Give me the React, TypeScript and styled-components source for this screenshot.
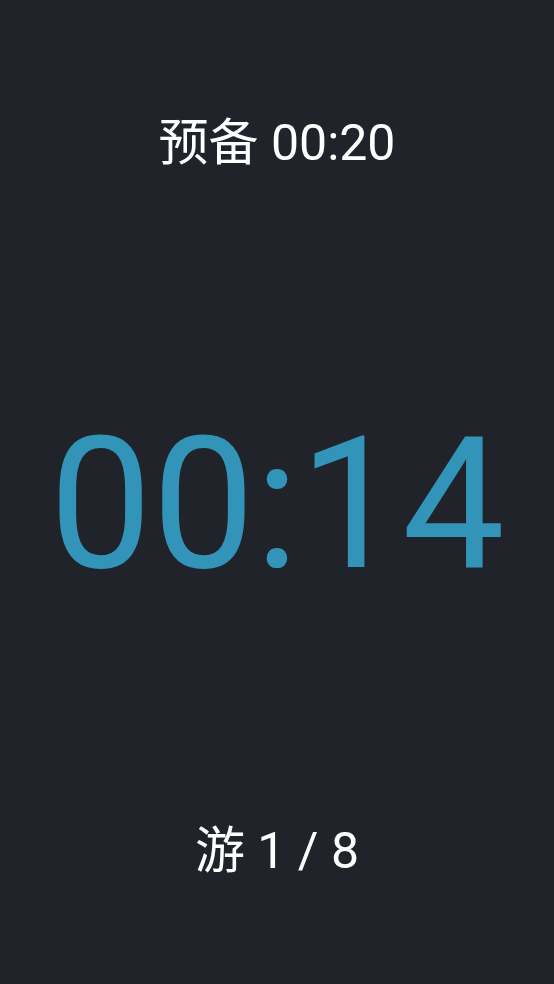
import React from 'react';
import styled, { createGlobalStyle } from 'styled-components';

const GlobalStyle = createGlobalStyle`
    html, body {
        margin: 0;
        padding: 0;
        background: #20232a;
    }
    body {
        font-family: Roboto, "Noto Sans CJK SC", sans-serif;
    }
`;

const Screen = styled.div`
    display: flex;
    flex-direction: column;
    align-items: center;
    width: 100%;
    height: 984px;
    padding-top: 118px;
    box-sizing: border-box;
    background: #20232a;
    color: #ffffff;
    overflow: hidden;
`;

const Label = styled.div<{ $gap?: number }>`
    font-size: 50px;
    line-height: 1;
    color: #ffffff;
    white-space: pre;
    margin-top: ${(p) => p.$gap ?? 0}px;
`;

const Clock = styled.div`
    margin-top: 245px;
    font-size: 183px;
    line-height: 1;
    color: #3194b8;
    white-space: nowrap;
`;

const App = () => {
    return (
        <>
            <GlobalStyle />
            <Screen>
                <Label>预备 00:20</Label>
                <Clock>00:14</Clock>
                <Label $gap={230}>游 1 / 8</Label>
            </Screen>
        </>
    );
};

export default App;
